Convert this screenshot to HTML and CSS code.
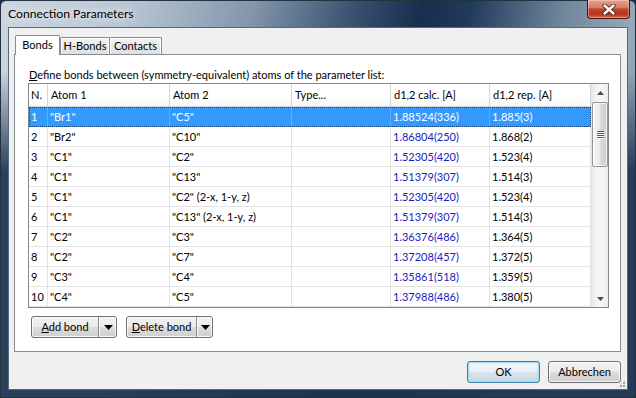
FILE: index.html
```html
<!DOCTYPE html>
<html>
<head>
<meta charset="utf-8">
<title>Connection Parameters</title>
<link rel="stylesheet" href="styles.css">
</head>
<body>
<div class="window">
  <div class="titlebar">
    <span class="title">Connection Parameters</span>
    <div class="close">
      <svg width="16" height="11" viewBox="0 0 16 11">
        <path d="M3.5 1.5 L12.5 9.5 M12.5 1.5 L3.5 9.5" stroke="#4a1c14" stroke-width="4.2" stroke-linecap="round" fill="none"/>
        <path d="M3.5 1.5 L12.5 9.5 M12.5 1.5 L3.5 9.5" stroke="#ffffff" stroke-width="2.4" stroke-linecap="round" fill="none"/>
      </svg>
    </div>
  </div>
  <div class="client">
    <div class="tabs">
      <div class="tab active">Bonds</div>
      <div class="tab">H-Bonds</div>
      <div class="tab last">Contacts</div>
    </div>
    <div class="pane">
      <div class="label"><u>D</u>efine bonds between (symmetry-equivalent) atoms of the parameter list:</div>
      <div class="table">
        <div class="grid">
          <div class="row head">
            <div class="cell">N.</div><div class="cell">Atom 1</div><div class="cell">Atom 2</div><div class="cell">Type...</div><div class="cell">d1,2 calc. [A]</div><div class="cell">d1,2 rep. [A]</div>
          </div>
          <div class="row sel">
            <div class="cell">1</div><div class="cell">"Br1"</div><div class="cell">"C5"</div><div class="cell"></div><div class="cell calc">1.88524(336)</div><div class="cell">1.885(3)</div>
          </div>
          <div class="row">
            <div class="cell">2</div><div class="cell">"Br2"</div><div class="cell">"C10"</div><div class="cell"></div><div class="cell calc">1.86804(250)</div><div class="cell">1.868(2)</div>
          </div>
          <div class="row">
            <div class="cell">3</div><div class="cell">"C1"</div><div class="cell">"C2"</div><div class="cell"></div><div class="cell calc">1.52305(420)</div><div class="cell">1.523(4)</div>
          </div>
          <div class="row">
            <div class="cell">4</div><div class="cell">"C1"</div><div class="cell">"C13"</div><div class="cell"></div><div class="cell calc">1.51379(307)</div><div class="cell">1.514(3)</div>
          </div>
          <div class="row">
            <div class="cell">5</div><div class="cell">"C1"</div><div class="cell">"C2" (2-x, 1-y, z)</div><div class="cell"></div><div class="cell calc">1.52305(420)</div><div class="cell">1.523(4)</div>
          </div>
          <div class="row">
            <div class="cell">6</div><div class="cell">"C1"</div><div class="cell">"C13" (2-x, 1-y, z)</div><div class="cell"></div><div class="cell calc">1.51379(307)</div><div class="cell">1.514(3)</div>
          </div>
          <div class="row">
            <div class="cell">7</div><div class="cell">"C2"</div><div class="cell">"C3"</div><div class="cell"></div><div class="cell calc">1.36376(486)</div><div class="cell">1.364(5)</div>
          </div>
          <div class="row">
            <div class="cell">8</div><div class="cell">"C2"</div><div class="cell">"C7"</div><div class="cell"></div><div class="cell calc">1.37208(457)</div><div class="cell">1.372(5)</div>
          </div>
          <div class="row">
            <div class="cell">9</div><div class="cell">"C3"</div><div class="cell">"C4"</div><div class="cell"></div><div class="cell calc">1.35861(518)</div><div class="cell">1.359(5)</div>
          </div>
          <div class="row">
            <div class="cell">10</div><div class="cell">"C4"</div><div class="cell">"C5"</div><div class="cell"></div><div class="cell calc">1.37988(486)</div><div class="cell">1.380(5)</div>
          </div>
        </div>
        <div class="scrollbar">
          <div class="sb-btn"><svg width="7" height="4" viewBox="0 0 7 4"><path d="M0 4 L3.5 0 L7 4 Z" fill="#4d4d4d"/></svg></div>
          <div class="sb-track">
            <div class="sb-thumb"><span></span><span></span><span></span><span></span></div>
          </div>
          <div class="sb-btn"><svg width="7" height="4" viewBox="0 0 7 4"><path d="M0 0 L3.5 4 L7 0 Z" fill="#4d4d4d"/></svg></div>
        </div>
      </div>
      <div class="actions">
        <div class="split add">
          <span class="main"><u>A</u>dd bond</span>
          <span class="drop"><svg width="9" height="5" viewBox="0 0 9 5"><path d="M0 0 L9 0 L4.5 5 Z" fill="#000"/></svg></span>
        </div>
        <div class="split del">
          <span class="main"><u>D</u>elete bond</span>
          <span class="drop"><svg width="9" height="5" viewBox="0 0 9 5"><path d="M0 0 L9 0 L4.5 5 Z" fill="#000"/></svg></span>
        </div>
      </div>
    </div>
    <div class="footer">
      <div class="btn default">OK</div>
      <div class="btn">Abbrechen</div>
    </div>
    <div class="grip"></div>
  </div>
</div>
</body>
</html>
```
FILE: styles.css
```css
* { box-sizing: border-box; margin: 0; padding: 0; }
html, body { width: 636px; height: 398px; overflow: hidden; }
body {
  font-family: Lato, "Open Sans", sans-serif;
  font-size: 11px;
  color: #000;
  background: #1b2f46;
}
.window {
  width: 636px;
  height: 398px;
  display: flex;
  flex-direction: column;
  border: 1px solid #24313f;
  border-radius: 6px 6px 0 0;
  background:
    linear-gradient(to bottom, rgba(28, 52, 80, 0) 70px, rgba(28, 52, 80, 0.92) 170px),
    linear-gradient(100deg, #cbd6e1 0%, #b9c7d4 18%, #8195ab 36%, #3a5371 50%, #172e4d 60%, #213b5b 67%, #6f859c 80%, #95a8ba 90%, #8195aa 100%);
}
.titlebar {
  height: 26px;
  flex: none;
  display: flex;
  align-items: flex-start;
  padding-left: 7px;
  padding-right: 5px;
}
.title {
  font-size: 12.2px;
  line-height: 25px;
  white-space: nowrap;
  text-shadow: 0 0 6px rgba(255,255,255,0.9), 0 0 10px rgba(255,255,255,0.6);
}
.close {
  margin-left: auto;
  margin-top: -1px;
  width: 43px;
  height: 19px;
  border: 1px solid #3e1610;
  border-top: none;
  border-radius: 0 0 4px 4px;
  background: linear-gradient(#e3a291 0%, #d58068 42%, #c2472f 50%, #b6321c 78%, #d8654d 100%);
  box-shadow: inset 0 0 0 1px rgba(255, 220, 210, 0.45);
  display: flex;
  align-items: center;
  justify-content: center;
}
.client {
  flex: 1;
  margin: 0 7px 7px 7px;
  border: 1px solid #56687a;
  background: #f0f0f0;
  display: flex;
  flex-direction: column;
  padding: 7px 6px 0 5px;
  position: relative;
}
.tabs {
  display: flex;
  align-items: flex-end;
  margin-left: 1px;
}
.tab {
  height: 17px;
  border: 1px solid #898c95;
  border-bottom: none;
  border-radius: 2px 2px 0 0;
  background: linear-gradient(#f4f4f4, #e6e6e6 60%, #dedede);
  box-shadow: inset 1px 1px 0 #fff, inset -1px 0 0 #fff;
  line-height: 16px;
  text-align: center;
  width: 50px;
  white-space: nowrap;
}
.tab.active {
  height: 20px;
  width: 45px;
  margin-bottom: -1px;
  background: #fff;
  box-shadow: none;
  position: relative;
  z-index: 1;
  line-height: 18px;
}
.tab.last { width: 53px; margin-left: -1px; }
.pane {
  height: 298px;
  border: 1px solid #898c95;
  background: #fff;
  padding: 12px 11px 0 13px;
  display: flex;
  flex-direction: column;
}
.label {
  height: 16px;
  line-height: 15px;
  padding-left: 1px;
  white-space: nowrap;
}
u { text-decoration: underline; text-underline-offset: 1px; }
.table {
  width: 581px;
  height: 225px;
  border: 1px solid #828790;
  display: flex;
  background: #fff;
}
.grid {
  width: 562px;
  display: flex;
  flex-direction: column;
}
.row {
  display: grid;
  grid-template-columns: 19px 122px 122px 99px 99px 101px;
  height: 20px;
}
.row.head {
  height: 23px;
  background: linear-gradient(#ffffff 0%, #ffffff 55%, #f6f7f8 100%);
}
.cell {
  border-right: 1px solid #e3e3e3;
  border-bottom: 1px solid #e3e3e3;
  padding-left: 2px;
  line-height: 19px;
  white-space: nowrap;
  overflow: hidden;
}
.row.head .cell {
  border-right: 1px solid #d5d5d5;
  border-bottom: 1px solid #d5d5d5;
  line-height: 22px;
  padding-left: 3px;
}
.row.head .cell:first-child { padding-left: 2px; }
.calc { color: #1b1bbd; }
.row.sel {
  background: #3399ff;
  outline: 1px dotted #0d3f7a;
  outline-offset: -1px;
}
.row.sel .cell { color: #fff; border-right-color: #5aadff; border-bottom-color: #3399ff; }
.scrollbar {
  width: 17px;
  display: flex;
  flex-direction: column;
  background: linear-gradient(to right, #e9e9e9, #f5f5f5 30%, #f5f5f5 70%, #ececec);
  border-left: 1px solid #e6e6e6;
}
.sb-btn {
  height: 17px;
  display: flex;
  align-items: center;
  justify-content: center;
  flex: none;
}
.sb-track {
  flex: 1;
  padding-top: 1px;
}
.sb-thumb {
  height: 65px;
  border: 1px solid #959595;
  border-radius: 2px;
  background: linear-gradient(to right, #f5f5f5, #ebebeb 45%, #d9d9d9 55%, #cfcfcf);
  box-shadow: inset 0 0 0 1px rgba(255,255,255,0.7);
  display: flex;
  flex-direction: column;
  align-items: center;
  justify-content: center;
  gap: 1px;
}
.sb-thumb span {
  width: 7px;
  height: 1px;
  background: #555;
  box-shadow: 0 1px 0 #fff;
}
.actions {
  display: flex;
  gap: 9px;
  margin-top: 8px;
  padding-left: 3px;
}
.split {
  height: 22px;
  display: flex;
  border: 1px solid #707070;
  border-radius: 3px;
  background: linear-gradient(#f2f2f2 0%, #ebebeb 50%, #dddddd 50%, #cfcfcf 100%);
  box-shadow: inset 0 0 0 1px rgba(255,255,255,0.8);
  white-space: nowrap;
}
.split .main {
  line-height: 20px;
  text-align: center;
  border-right: 1px solid #8a8a8a;
}
.split.add .main { width: 67px; }
.split.del .main { width: 70px; }
.split .drop {
  flex: 1;
  display: flex;
  align-items: center;
  justify-content: center;
  border-left: 1px solid #fafafa;
}
.split.add { width: 86px; }
.split.del { width: 87px; }
.footer {
  display: flex;
  justify-content: flex-end;
  gap: 8px;
  margin-top: 9px;
}
.btn {
  width: 73px;
  height: 22px;
  border: 1px solid #707070;
  border-radius: 3px;
  background: linear-gradient(#f2f2f2 0%, #ebebeb 50%, #dddddd 50%, #cfcfcf 100%);
  box-shadow: inset 0 0 0 1px rgba(255,255,255,0.8);
  text-align: center;
  line-height: 20px;
}
.btn.default {
  border-color: #3c7fb1;
  background: linear-gradient(#f4f8fa 0%, #e9f1f5 50%, #d9e5ec 50%, #cbd8e0 100%);
  box-shadow: inset 0 0 0 1px #a6dcf5, inset 0 0 2px 1px rgba(120, 200, 240, 0.5);
}
.grip {
  position: absolute;
  right: 1px;
  bottom: 1px;
  width: 9px;
  height: 9px;
  background:
    radial-gradient(circle at 1px 1px, #a0a0a0 0.9px, transparent 1.2px) 0 0 / 3px 3px;
  clip-path: polygon(100% 0, 100% 100%, 0 100%);
}
```
